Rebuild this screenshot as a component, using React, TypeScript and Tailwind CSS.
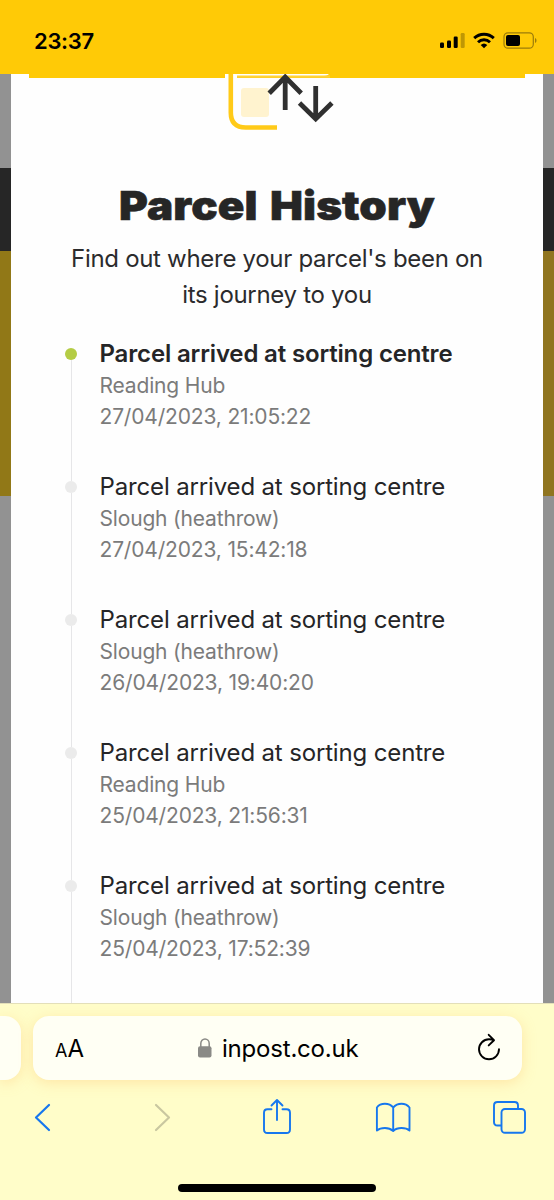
const events = [
  { place: 'Reading Hub', time: '27/04/2023, 21:05:22' },
  { place: 'Slough (heathrow)', time: '27/04/2023, 15:42:18' },
  { place: 'Slough (heathrow)', time: '26/04/2023, 19:40:20' },
  { place: 'Reading Hub', time: '25/04/2023, 21:56:31' },
  { place: 'Slough (heathrow)', time: '25/04/2023, 17:52:39' },
];

function StatusBar() {
  return (
    <header className="flex h-[74px] shrink-0 items-start justify-between bg-[#ffca06] pl-[34px] pr-[17px] text-black">
      <time className="mt-[27px] text-[22px] font-semibold leading-[28px] tracking-[-0.3px]">23:37</time>
      <svg className="mt-[30px]" width="98" height="20" viewBox="439 30 98 20">
        <rect x="440" y="42.5" width="4" height="5.5" rx="1.2" />
        <rect x="447" y="40.5" width="4" height="7.5" rx="1.2" />
        <rect x="453.7" y="36.5" width="4" height="11.5" rx="1.2" />
        <rect x="460.7" y="33" width="4" height="15" rx="1.2" opacity=".25" />
        <g fill="none" stroke="#000" strokeWidth="2.9">
          <path d="M474.2 38.1a14.2 14.2 0 0 1 19.6 0" />
          <path d="M478 42.2a8.7 8.7 0 0 1 12 0" />
        </g>
        <path d="M480.7 44.9a4.9 4.9 0 0 1 6.6 0L484 48.2z" />
        <rect x="504" y="32.8" width="29.3" height="15.4" rx="4" fill="none" stroke="#9c7c0a" strokeWidth="1.2" />
        <rect x="506" y="35" width="14" height="11" rx="2" />
        <path d="M535 38v5c2-.7 2-4.3 0-5z" fill="#9c7c0a" />
      </svg>
    </header>
  );
}

function BackdropStrip({ gold }: { gold: string }) {
  return (
    <div className="flex w-[11px] shrink-0 flex-col">
      <div className="h-[94px] bg-[#929292]" />
      <div className="h-[83px] bg-[#262626]" />
      <div className={'h-[245px] ' + gold} />
      <div className="flex-1 bg-[#929292]" />
    </div>
  );
}

function ParcelIcon() {
  return (
    <svg className="-mt-1 ml-[213px]" width="112" height="60" viewBox="224 74 112 60" fill="none">
      <path d="M225 74h104q-2 2.2-8 2.3H237V78H225z" fill="#fff" />
      <path d="M237 76.7h93" stroke="#ffd236" strokeWidth="2.2" />
      <path d="M230.8 74v38.5q0 15 15 15H277" stroke="#ffca18" strokeWidth="4.6" />
      <rect x="241" y="88" width="28" height="29" rx="3" fill="#fff3cf" />
      <g stroke="#303030" strokeWidth="4.8">
        <path d="M285.2 110V77M269.2 93.2l16-16.2 16 16.2" />
        <path d="M315.7 86v33M299.5 103l16.2 16 16.2-16" />
      </g>
    </svg>
  );
}

function Event({ place, time, current }: { place: string; time: string; current: boolean }) {
  return (
    <li className="flex h-[133px] gap-[22.5px]">
      <div className="flex w-3 flex-col items-center">
        <span className={current ? 'size-3 shrink-0 rounded-full bg-[#b4cc45]' : 'size-3 shrink-0 rounded-full bg-[#ebebeb]'} />
        <span className="w-px flex-1 bg-[#e6e6e8]" />
      </div>
      <div className="-mt-[10px] whitespace-nowrap">
        <h2 className={current ? 'text-[24px] font-semibold leading-[32px] tracking-[-0.16px] text-[#252527]' : 'text-[24px] leading-[32px] tracking-[-0.15px] text-[#252527]'}>
          Parcel arrived at sorting centre
        </h2>
        <p className="text-[21px] leading-[31px] tracking-[-0.17px] text-[#7b7b7b]">{place}</p>
        <p className="text-[21px] leading-[31px] tracking-[-0.17px] text-[#7b7b7b]">{time}</p>
      </div>
    </li>
  );
}

function SafariBar() {
  return (
    <footer className="flex h-[197px] shrink-0 flex-col border-t border-[#e3dfb9] bg-[#fffdc9]">
      <div className="mt-3 flex h-16 gap-[12px]">
        <div className="w-[21px] rounded-r-[16px] bg-[#fffff4] shadow-[0_3px_14px_rgba(255,190,100,0.35)]" />
        <div className="flex w-[489px] items-center rounded-[16px] bg-[#fffff4] pl-[22px] pr-[21px] shadow-[0_3px_14px_rgba(255,190,100,0.35)]">
          <span className="mt-[3px] flex w-[143px] items-baseline text-black">
            <span className="text-[18px] leading-[30px]">A</span>
            <span className="text-[24px] leading-[30px]">A</span>
          </span>
          <svg width="14" height="20" viewBox="0 0 14 20" fill="none">
            <path d="M2.8 9V5.5a4.2 4.5 0 0 1 8.4 0V9" stroke="#8a8a86" strokeWidth="1.5" />
            <rect x="0" y="8.3" width="13.5" height="11.2" rx="2" fill="#8a8a86" />
          </svg>
          <span className="ml-[10px] mt-[2px] text-[24px] leading-[30px] tracking-[-0.2px] text-black">inpost.co.uk</span>
          <svg className="ml-auto" width="24" height="30" viewBox="477 1033 24 30" fill="none" stroke="#000" strokeWidth="1.9" strokeLinecap="round" strokeLinejoin="round">
            <path d="M494 1040.2q-2.2-.9-5-.9A10 10 0 1 0 499 1049.3M488.700 1034.800l5.300 5.400-5.300 5.200" />
          </svg>
        </div>
      </div>
      <nav className="mt-[14px] flex h-12 pl-[33px] text-[#1677ee]">
        <svg width="20" height="48" viewBox="33 1094 20 48" fill="none" stroke="currentColor" strokeWidth="2.2" strokeLinecap="round" strokeLinejoin="round">
          <path d="M49 1105l-13 12.5 13 12.5" />
        </svg>
        <svg className="ml-[100px]" width="20" height="48" viewBox="153 1094 20 48" fill="none" stroke="#c9c7a0" strokeWidth="2.2" strokeLinecap="round" strokeLinejoin="round">
          <path d="M156 1105l13 12.5-13 12.5" />
        </svg>
        <svg className="ml-[89px]" width="30" height="48" viewBox="262 1094 30 48" fill="none" stroke="currentColor" strokeWidth="1.9" strokeLinecap="round" strokeLinejoin="round">
          <path d="M271.500 1109.300h-4q-3.500 0-3.500 3.500v16.700q0 3.500 3.500 3.500h19q3.500 0 3.500-3.500v-16.700q0-3.500-3.500-3.500h-4M277 1120v-19.500M271.500 1105.500l5.500-5.500 5.500 5.500" />
        </svg>
        <svg className="ml-[82px]" width="38" height="48" viewBox="374 1094 38 48" fill="none" stroke="currentColor" strokeWidth="1.9" strokeLinejoin="round">
          <path d="M393.200 1107.500q-3-3.700-8.300-3.700t-8 3.700V1130.500q3-2.500 8-2.500t8.300 3q3-3 8.300-3t8 2.500V1107.500q-3-3.700-8-3.700t-8.300 3.700V1131" />
        </svg>
        <svg className="ml-[80px]" width="36" height="48" viewBox="492 1094 36 48" fill="none" stroke="currentColor" strokeWidth="1.9">
          <path d="M501 1125.500h-3.500q-3.500 0-3.500-3.500v-16.500q0-3.500 3.500-3.500h17q3.500 0 3.500 3.500v3.500" />
          <rect x="501.500" y="1109" width="23.500" height="23.800" rx="3.500" />
        </svg>
      </nav>
      <div className="mt-[42px] h-[8px] w-[198px] shrink-0 self-center rounded-full bg-black" />
    </footer>
  );
}

export default function App() {
  return (
    <div className="flex h-[1200px] w-[554px] flex-col overflow-hidden bg-white font-['Inter',sans-serif]">
      <StatusBar />
      <main className="flex h-[929px] shrink-0 overflow-hidden">
        <BackdropStrip gold="bg-[#917817]" />
        <section className="min-w-0 flex-1 bg-[#fefefe]">
          <div className="ml-[18px] mr-[18px] h-1 bg-[#ffca06]" />
          <ParcelIcon />
          <h1 className="mt-[48px] scale-x-[1.1] whitespace-nowrap text-center text-[40px] font-black leading-[48px] tracking-[0.1px] [word-spacing:3px] [-webkit-text-stroke:0.6px_#262626] text-[#262626]">Parcel History</h1>
          <p className="mt-[11px] text-center text-[24px] leading-[36px] tracking-[-0.3px] text-[#2b2b2d]">
            Find out where your parcel's been on
            <br />
            its journey to you
          </p>
          <ul className="mt-[35px] pl-[54px]">
            {events.map((e, i) => (
              <Event key={e.time} place={e.place} time={e.time} current={i === 0} />
            ))}
          </ul>
        </section>
        <BackdropStrip gold="bg-[#907520]" />
      </main>
      <SafariBar />
    </div>
  );
}
